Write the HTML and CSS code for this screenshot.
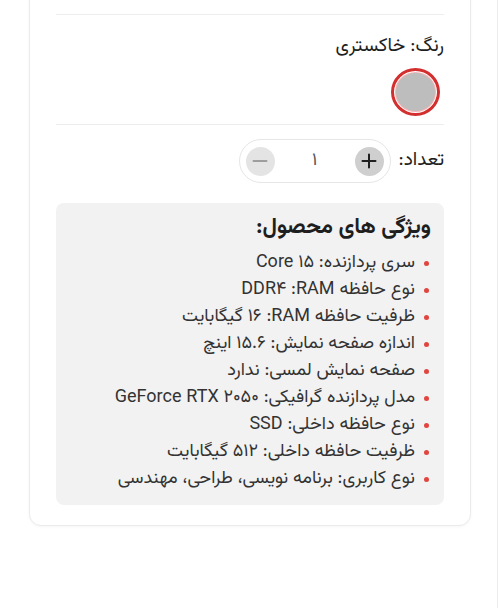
FILE: index.html
```html
<!DOCTYPE html>
<html lang="fa" dir="rtl">
<head>
<meta charset="utf-8">
<title>محصول</title>
<link rel="stylesheet" href="styles.css">
</head>
<body>
<div class="page">
  <div class="card">
    <hr class="divider">
    <section class="color-section">
      <div class="label">رنگ: خاکستری</div>
      <div class="swatches">
        <span class="swatch selected"><span class="swatch-fill"></span></span>
      </div>
    </section>
    <hr class="divider">
    <section class="qty-row">
      <div class="label">تعداد:</div>
      <div class="qty">
        <button class="qty-btn plus" aria-label="افزایش">
          <svg width="16" height="16" viewBox="0 0 16 16"><path d="M8 1.5v13M1.5 8h13" stroke="#1f1f1f" stroke-width="2" stroke-linecap="round"/></svg>
        </button>
        <span class="qty-value">۱</span>
        <button class="qty-btn minus" aria-label="کاهش">
          <svg width="16" height="16" viewBox="0 0 16 16"><path d="M1.5 8h13" stroke="#9e9e9e" stroke-width="2" stroke-linecap="round"/></svg>
        </button>
      </div>
    </section>
    <section class="features">
      <h2 class="features-title">ویژگی های محصول:</h2>
      <ul class="features-list">
        <li>سری پردازنده:&rlm; Core ۱۵</li>
        <li>نوع حافظه RAM:&rlm; DDR۴</li>
        <li>ظرفیت حافظه RAM:&rlm; ۱۶ گیگابایت</li>
        <li>اندازه صفحه نمایش:&rlm; ۱۵.۶ اینچ</li>
        <li>صفحه نمایش لمسی:&rlm; ندارد</li>
        <li>مدل پردازنده گرافیکی:&rlm; GeForce RTX ۲۰۵۰</li>
        <li>نوع حافظه داخلی:&rlm; SSD</li>
        <li>ظرفیت حافظه داخلی:&rlm; ۵۱۲ گیگابایت</li>
        <li>نوع کاربری:&rlm; برنامه نویسی، طراحی، مهندسی</li>
      </ul>
    </section>
  </div>
</div>
</body>
</html>
```
FILE: styles.css
```css
* { box-sizing: border-box; }
html, body {
  margin: 0;
  padding: 0;
  background: #ffffff;
}
body {
  font-family: "Vazirmatn", "DejaVu Sans", "Noto Sans", sans-serif;
  color: #222;
  overflow: hidden;
}
.page {
  width: 497px;
  height: 608px;
  border-right: 1px solid #ececec;
  padding-right: 26px;
  overflow: hidden;
}
.card {
  width: 442px;
  margin-top: -20px;
  padding: 33px 26px 20px;
  border: 1px solid #ebebeb;
  border-radius: 12px;
  background: #fff;
  box-shadow: 0 1px 3px rgba(0,0,0,0.04);
}
.divider {
  border: 0;
  height: 1px;
  background: #ededed;
  margin: 0;
}
.label {
  font-size: 19px;
  line-height: 24px;
  color: #1e1e1e;
}
.color-section {
  padding-top: 20px;
  padding-bottom: 8px;
}
.swatches {
  display: flex;
  margin-top: 9px;
  padding-right: 4px;
}
.swatch {
  width: 49px;
  height: 48px;
  border-radius: 50%;
  border: 3.5px solid #d32f2f;
  padding: 2px;
  background: #fff;
  display: flex;
}
.swatch-fill {
  flex: 1;
  border-radius: 50%;
  background: #bdbdbd;
  box-shadow: 0 0 0 1px #f3b4b4;
}
.qty-row {
  display: flex;
  align-items: center;
  gap: 8px;
  margin-top: 14px;
}
.qty {
  display: flex;
  align-items: center;
  justify-content: space-between;
  width: 152px;
  height: 44px;
  padding: 0 6px;
  border: 1px solid #e6e6e6;
  border-radius: 22px;
  background: #fff;
}
.qty-btn {
  width: 29px;
  height: 29px;
  border: 0;
  border-radius: 50%;
  padding: 0;
  display: flex;
  align-items: center;
  justify-content: center;
  cursor: pointer;
}
.qty-btn.plus { background: #cfcfcf; }
.qty-btn.minus { background: #e4e4e4; }
.qty-value {
  font-size: 18px;
  color: #555;
}
.features {
  margin-top: 20px;
  background: #f2f2f2;
  border-radius: 8px;
  padding: 11px 13px 12px;
  height: 302px;
}
.features-title {
  margin: 0;
  font-size: 22px;
  line-height: 28px;
  font-weight: 700;
  color: #1e1e1e;
}
.features-list {
  list-style: none;
  margin: 8px 0 0;
  padding: 0;
}
.features-list li {
  display: flex;
  align-items: center;
  gap: 9px;
  font-size: 18px;
  line-height: 27px;
  color: #333;
  padding-right: 2px;
}
.features-list li::before {
  content: "";
  width: 5px;
  height: 5px;
  border-radius: 50%;
  background: #e0453f;
  flex: none;
}
```
